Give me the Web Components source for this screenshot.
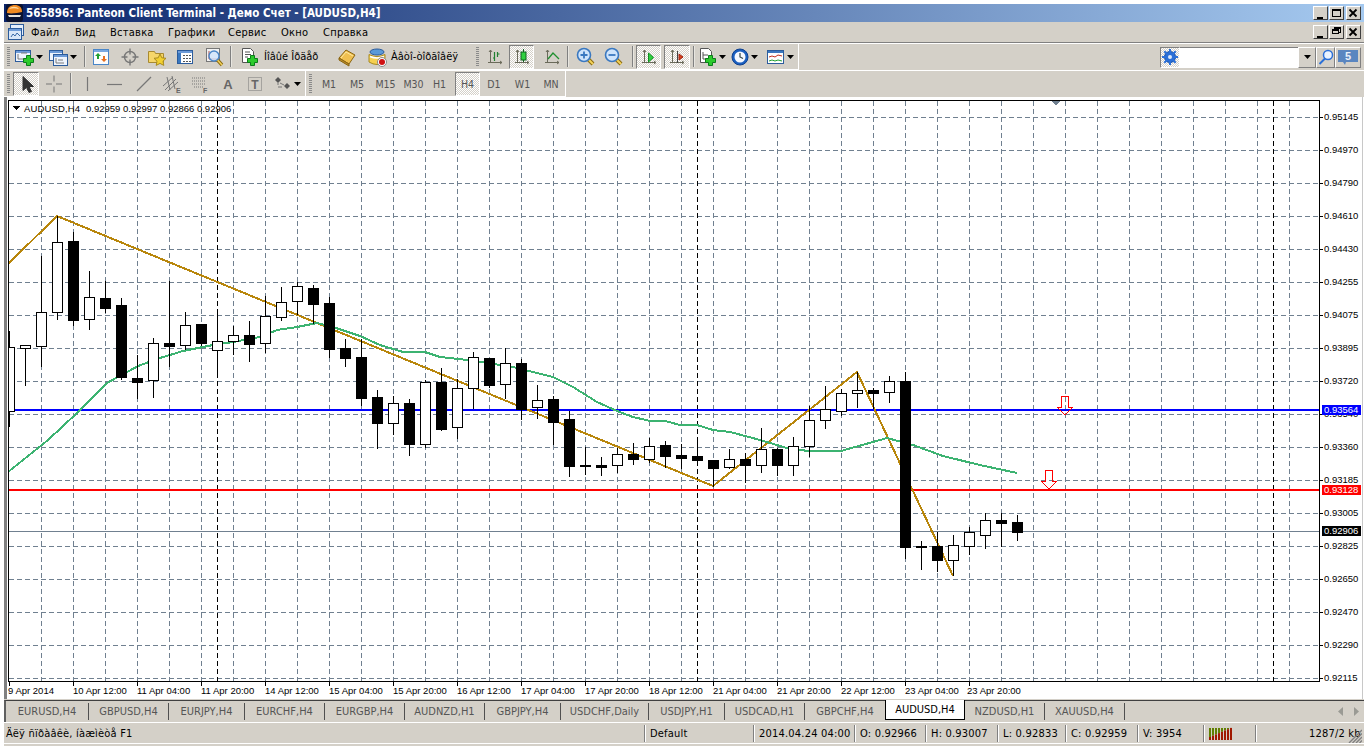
<!DOCTYPE html>
<html>
<head>
<meta charset="utf-8">
<title>Panteon Client Terminal</title>
<style>
  html, body { margin: 0; padding: 0; background: #fff; overflow: hidden; }
  body { font: 11px "DejaVu Sans Condensed", "DejaVu Sans", "Liberation Sans", sans-serif; color: #000; }
</style>
</head>
<body>
<mt-window>
  <mt-titlebar>565896: Panteon Client Terminal - Демо Счет - [AUDUSD,H4]</mt-titlebar>
  <mt-menubar>
    <mt-menu w="44">Файл</mt-menu>
    <mt-menu w="35">Вид</mt-menu>
    <mt-menu w="58">Вставка</mt-menu>
    <mt-menu w="60">Графики</mt-menu>
    <mt-menu w="53">Сервис</mt-menu>
    <mt-menu w="42">Окно</mt-menu>
    <mt-menu w="50">Справка</mt-menu>
  </mt-menubar>
  <mt-row h="27">
    <mt-toolbar>
      <mt-grip w="8"></mt-grip>
      <mt-tool icon="newchart" w="33" arrow></mt-tool>
      <mt-tool icon="profiles" w="35" arrow></mt-tool>
      <mt-sep w="8"></mt-sep>
      <mt-tool icon="market" w="25"></mt-tool>
      <mt-tool icon="target" w="34"></mt-tool>
      <mt-tool icon="folder" w="20"></mt-tool>
      <mt-tool icon="terminal" w="36"></mt-tool>
      <mt-tool icon="tester" w="23"></mt-tool>
      <mt-sep w="8"></mt-sep>
      <mt-tool icon="order" w="86" start="6" label="Íîâûé Îðäåð"></mt-tool>
      <mt-tool icon="gold" w="40" start="18"></mt-tool>
      <mt-tool icon="auto" w="112" start="7" label="Àâòî-òîðãîâëÿ"></mt-tool>
    </mt-toolbar>
    <mt-toolbar edge>
      <mt-grip w="10"></mt-grip>
      <mt-tool icon="bars" w="26"></mt-tool>
      <mt-tool icon="candles" w="25" gap="1" pressed></mt-tool>
      <mt-tool icon="line" w="29" gap="3"></mt-tool>
      <mt-sep w="3" ></mt-sep>
      <mt-tool icon="zoomin" w="29" gap="2"></mt-tool>
      <mt-tool icon="zoomout" w="28"></mt-tool>
      <mt-sep w="8"></mt-sep>
      <mt-tool icon="scroll" w="25" pressed></mt-tool>
      <mt-tool icon="shift" w="26" gap="3" pressed></mt-tool>
      <mt-sep w="6"></mt-sep>
      <mt-tool icon="indicators" w="31" arrow></mt-tool>
      <mt-tool icon="clock" w="34" arrow></mt-tool>
      <mt-tool icon="templates" w="37" arrow></mt-tool>
    </mt-toolbar>
    <mt-search></mt-search>
  </mt-row>
  <mt-row h="27" dark>
    <mt-toolbar edge>
      <mt-grip w="9"></mt-grip>
      <mt-tool icon="pointer" w="26" pressed></mt-tool>
      <mt-tool icon="cross" w="25" gap="2"></mt-tool>
      <mt-sep w="8"></mt-sep>
      <mt-tool icon="vline" w="26"></mt-tool>
      <mt-tool icon="hline" w="30"></mt-tool>
      <mt-tool icon="trend" w="28"></mt-tool>
      <mt-tool icon="channel" w="28"></mt-tool>
      <mt-tool icon="fibo" w="28"></mt-tool>
      <mt-tool icon="letter" w="27"></mt-tool>
      <mt-tool icon="textlabel" w="28"></mt-tool>
      <mt-tool icon="shapes" w="36" arrow></mt-tool>
    </mt-toolbar>
    <mt-toolbar edge>
      <mt-grip w="9"></mt-grip>
      <mt-tool w="28" text="M1"></mt-tool>
      <mt-tool w="28" text="M5"></mt-tool>
      <mt-tool w="29" text="M15"></mt-tool>
      <mt-tool w="27" text="M30"></mt-tool>
      <mt-tool w="25" text="H1" ></mt-tool>
      <mt-tool w="25" gap="3" text="H4" pressed></mt-tool>
      <mt-tool w="28" text="D1"></mt-tool>
      <mt-tool w="29" text="W1"></mt-tool>
      <mt-tool w="28" text="MN"></mt-tool>
    </mt-toolbar>
  </mt-row>
  <mt-chart></mt-chart>
  <mt-tabs>
    <mt-tab w="83">EURUSD,H4</mt-tab>
    <mt-tab w="80">GBPUSD,H4</mt-tab>
    <mt-tab w="76">EURJPY,H4</mt-tab>
    <mt-tab w="80">EURCHF,H4</mt-tab>
    <mt-tab w="80">EURGBP,H4</mt-tab>
    <mt-tab w="80">AUDNZD,H1</mt-tab>
    <mt-tab w="76">GBPJPY,H4</mt-tab>
    <mt-tab w="88">USDCHF,Daily</mt-tab>
    <mt-tab w="76">USDJPY,H1</mt-tab>
    <mt-tab w="80">USDCAD,H1</mt-tab>
    <mt-tab w="80" plain>GBPCHF,H4</mt-tab>
    <mt-tab w="80" active>AUDUSD,H4</mt-tab>
    <mt-tab w="80">NZDUSD,H1</mt-tab>
    <mt-tab w="80">XAUUSD,H4</mt-tab>
  </mt-tabs>
  <mt-status>
    <mt-cell w="640" first>Äëÿ ñïðàâêè, íàæìèòå F1</mt-cell>
    <mt-cell w="109">Default</mt-cell>
    <mt-cell w="101">2014.04.24 04:00</mt-cell>
    <mt-cell w="71">O: 0.92966</mt-cell>
    <mt-cell w="72">H: 0.93007</mt-cell>
    <mt-cell w="68">L: 0.92833</mt-cell>
    <mt-cell w="72">C: 0.92959</mt-cell>
    <mt-cell w="66">V: 3954</mt-cell>
    <mt-cell w="52" meter></mt-cell>
    <mt-cell w="100" pad="53">1287/2 kb</mt-cell>
  </mt-status>
</mt-window>

<script>
'use strict';

(function() {
  const FACE = '#d4d0c8';
  const FONT = '"DejaVu Sans Condensed", "DejaVu Sans", "Liberation Sans", sans-serif';

  // small drawing helpers for the toolbar icons
  const plus = (x, y) => `<path d="M${x + 3.5} ${y + .5}h4v3h3v4h-3v3h-4v-3h-3v-4h3z" fill="#2ccb2c" stroke="#0a7d1a"/>`;
  const axes = `<path d="M5.5 3v13M3 15.5h14M4 5l1.5-2 1.5 2M15 14l2 1.5-2 1.5" fill="none" stroke="#6a6a5a"/>`;
  const lens = (sign) => `<path d="M12 12l5 5" stroke="#8a6a10" stroke-width="4"/><path d="M12 12l5 5" stroke="#f4d35a" stroke-width="2"/>
    <circle cx="8" cy="8" r="6.5" fill="#cfe4fb" stroke="#3a78c0" stroke-width="1.6"/>${sign}`;
  const win = (x, y, w, h) => `<rect x="${x + .5}" y="${y + .5}" width="${w}" height="${h}" fill="#eef4fd" stroke="#2c5c9c"/><rect x="${x + 1}" y="${y + 1}" width="${w - 1}" height="2" fill="#6d9bd8"/>`;

  const ICONS = {
    newchart: `${win(0, 3, 15, 11)}<path d="M3 7v5h8M6 6h6" fill="none" stroke="#7b7b7b"/>${plus(8, 8)}`,
    profiles: `${win(0, 3, 13, 10)}${win(4, 7, 14, 11)}<path d="M7 11v5h8M9 13h5" fill="none" stroke="#7b7b7b"/>`,
    market: `<rect x="2.5" y="2.5" width="15" height="15" fill="#fdfdfd" stroke="#4a86c8"/><rect x="3" y="3" width="14" height="2" fill="#7aa8e0"/><path d="M7 6l3 3H8v3H6V9H4z" fill="#20a030"/><path d="M13 15l-3-3h2V9h2v3h2z" fill="#e87020"/>`,
    target: `<circle cx="10" cy="10" r="5.5" fill="none" stroke="#777" stroke-width="1.4"/><path d="M10 1.5v6M10 12.5v6M1.5 10h6M12.5 10h6" stroke="#777" stroke-width="1.4"/>`,
    folder: `<path d="M1.5 4.5h6l1 2h8v9h-15z" fill="#f6d66a" stroke="#a88a30"/><path d="M13 7l1.8 3.8 4.2.5-3 2.9.8 4.2-3.8-2-3.8 2 .8-4.2-3-2.9 4.2-.5z" fill="#f2d030" stroke="#a88a20"/>`,
    terminal: `<rect x="2.5" y="3.5" width="15" height="13" fill="#fff" stroke="#2c5c9c"/><rect x="3" y="4" width="14" height="2" fill="#6d9bd8"/><rect x="3" y="6" width="3" height="10" fill="#3a78c0"/><path d="M8 8.5h8M8 11.500h8M8 14.500h8" stroke="#555" stroke-dasharray="2 1"/>`,
    tester: `<rect x="1.500" y="1.500" width="13" height="13" fill="#f2f2f2" stroke="#777"/><path d="M4 4v8h8" fill="none" stroke="#b05050"/><path d="M12.500 13l4.500 5" stroke="#8a6a10" stroke-width="3.400"/><path d="M12.500 13l4.500 5" stroke="#f4d35a" stroke-width="1.500"/><circle cx="9" cy="9" r="5" fill="#cfe4fb" fill-opacity=".8" stroke="#4a86c8" stroke-width="1.400"/>`,
    order: `<path d="M2.500 1.500h8l3 3v11h-11z" fill="#fff" stroke="#555"/><path d="M5 5h5M5 7.500h6M5 10h3" stroke="#555"/>${plus(7, 8)}`,
    gold: `<path d="M1 11l7-8 9 5-6 9z" fill="#f0c050" stroke="#8a6410"/><path d="M3 11l5-6 7 4" fill="none" stroke="#ffe9a0"/><path d="M1 11l10 6v2L1 13z" fill="#b88a28" stroke="#8a6410"/>`,
    auto: `<ellipse cx="10" cy="5" rx="7" ry="3" fill="#5a9ad8" stroke="#2c5c9c"/><path d="M2 7.500q8 4 16 0L18 15q-8 5-16 0z" fill="#f6d050" stroke="#a88a20"/><path d="M3 9.500q7 3 14 0" fill="none" stroke="#fff" stroke-width="1.500"/><circle cx="15" cy="15" r="4.500" fill="#fff" stroke="#888"/><circle cx="15" cy="15" r="3" fill="#d01010"/>`,
    bars: `${axes}<path d="M9.500 5v9M12.500 5v5M9.500 11H8M12.500 7h2" fill="none" stroke="#208030" stroke-width="1.200"/>`,
    candles: `${axes}<path d="M11.500 2v13" stroke="#106020"/><rect x="9" y="5" width="5" height="8" fill="#30d040" stroke="#106020"/>`,
    line: `${axes}<path d="M6 12l5-6 6 6" fill="none" stroke="#209030" stroke-width="1.300"/>`,
    zoomin: lens(`<path d="M4.500 8h7M8 4.500v7" stroke="#3a78c0" stroke-width="1.800"/>`),
    zoomout: lens(`<path d="M4.500 8h7" stroke="#3a78c0" stroke-width="1.800"/>`),
    scroll: `${axes}<path d="M9.500 6l5 4.500-5 4.500z" fill="#30d040" stroke="#109020"/>`,
    shift: `${axes}<path d="M10.500 4v12" stroke="#444"/><path d="M16 10l-4-3v6z" fill="#d8401a" stroke="#a02010"/>`,
    indicators: `<path d="M2.500 1.500h8l3 3v11h-11z" fill="#fff" stroke="#555"/><path d="M5 5v7h6M5 8h5" stroke="#555" fill="none"/>${plus(7, 8)}`,
    clock: `<circle cx="10" cy="10" r="8" fill="#1a5fc0" stroke="#0d3f8e"/><circle cx="10" cy="10" r="5.500" fill="#f4f8ff"/><path d="M10 6v4l3 1.500" fill="none" stroke="#344" stroke-width="1.200"/>`,
    templates: `<rect x="1.500" y="3.500" width="16" height="13" fill="#fff" stroke="#2c5c9c"/><rect x="2" y="4" width="15" height="2" fill="#3a78c0"/><path d="M3 10l3-1 3 1 3-2 4 1" fill="none" stroke="#c03020"/><path d="M3 14l3-1 3 1 3-1 4 1" fill="none" stroke="#20a030"/>`,
    pointer: `<path d="M7 2.500v14l3.500-3 2.500 5 2.500-1-2.500-5h4.500z" fill="#333" stroke="#333" stroke-linejoin="round"/>`,
    cross: `<path d="M10 1.500v6M10 12.500v6M2 10h6M12 10h6" stroke="#777"/>`,
    vline: `<path d="M10.500 3v14" stroke="#777" stroke-width="1.200"/>`,
    hline: `<path d="M2 10.500h15" stroke="#777" stroke-width="1.200"/>`,
    trend: `<path d="M3 17L17 3" stroke="#777" stroke-width="1.200"/>`,
    channel: `<path d="M1 12L11 3M3 16L14 5M6 17L16 8M5 3l3 13M10 2l3 13" stroke="#777" fill="none"/><text x="14" y="19" font-size="7" font-weight="700" fill="#666" font-family="Liberation Sans">E</text>`,
    fibo: `<path d="M2 4h14M2 7h14M2 10h14M4 13h10" stroke="#777" stroke-dasharray="1 1"/><text x="13" y="19" font-size="7" font-weight="700" fill="#666" font-family="Liberation Sans">F</text>`,
    letter: `<text x="10" y="15" text-anchor="middle" font-size="13" font-weight="700" fill="#666" font-family="Liberation Sans">A</text>`,
    textlabel: `<rect x="3.500" y="3.500" width="13" height="13" fill="none" stroke="#777" stroke-dasharray="1 1"/><text x="10" y="14.500" text-anchor="middle" font-size="12" font-weight="700" fill="#666" font-family="Liberation Sans">T</text>`,
    shapes: `<path d="M5 3l3 3-3 3-3-3z" fill="#555"/><path d="M14 9l3 3-3 3-3-3z" fill="#555"/><path d="M5 9v2M7 9l4 2M5 13h4" stroke="#777"/>`
  };

  const CANDLES = [
    [331,347,411,426,1],[345,345,348,385,1],[256,312,346,366,1],[216,242,312,319,1],[232,241,320,325,0],
    [271,297,319,329,1],[281,298,308,312,0],[298,305,377,379,0],[355,378,382,398,0],[338,343,380,397,1],
    [281,343,346,366,0],[312,325,345,349,1],[324,324,343,345,0],[310,341,350,374,1],[326,335,341,354,1],
    [321,335,344,361,0],[296,316,343,352,1],[287,302,317,320,1],[282,286,301,314,1],[285,288,304,323,0],
    [297,303,349,357,0],[339,348,358,366,0],[339,357,398,405,0],[390,397,423,448,0],[396,403,423,434,1],
    [399,403,444,455,0],[380,382,444,447,1],[368,382,429,430,0],[379,388,427,438,1],[352,357,388,408,1],
    [358,358,385,387,0],[348,363,384,398,1],[359,363,409,419,0],[385,400,407,418,1],[396,399,422,444,0],
    [411,419,466,476,0],[447,465,466,474,0],[457,465,467,475,0],[448,454,465,472,1],[443,454,459,464,0],
    [438,446,459,462,1],[441,445,456,467,0],[444,455,458,468,0],[437,456,460,465,0],[460,460,468,486,0],
    [449,459,467,468,1],[453,459,465,482,0],[428,449,465,472,1],[448,449,465,475,0],[437,446,465,475,1],
    [406,420,446,456,1],[386,409,420,428,1],[389,393,411,415,1],[372,390,393,407,1],[388,390,393,408,0],
    [376,381,392,402,1],[372,381,547,558,0],[541,546,547,569,0],[532,546,560,571,0],[535,545,560,575,1],
    [527,532,546,554,1],[513,520,535,548,1],[513,520,523,546,0],[515,522,532,540,0]
  ];
  const MA = [[8,472],[48,440],[77,413],[107,383],[138,366],[160,358],[183,351],[213,345],[233,342],[260,337],[277,330],[297,327],[317,323],[333,327],[360,336],[380,345],[403,352],[425,352],[440,357],[467,360],[487,363],[513,367],[553,377],[573,387],[597,402],[617,411],[633,417],[650,421],[665,421],[680,425],[697,425],[713,430],[730,432],[760,440],[787,448],[808,451],[841,451],[887,438],[913,445],[943,456],[980,465],[1017,473]];
  const PRICES = ['0.95145','0.94970','0.94790','0.94610','0.94430','0.94255','0.94075','0.93895','0.93720','0.93540','0.93360','0.93185','0.93005','0.92825','0.92650','0.92470','0.92290','0.92115'];
  const TIMES = ['10 Apr 12:00','11 Apr 04:00','11 Apr 20:00','14 Apr 12:00','15 Apr 04:00','15 Apr 20:00','16 Apr 12:00','17 Apr 04:00','17 Apr 20:00','18 Apr 12:00','21 Apr 04:00','21 Apr 20:00','22 Apr 12:00','23 Apr 04:00','23 Apr 20:00'];

  function shadow(el, html) {
    const root = el.attachShadow({ mode: 'open' });
    root.innerHTML = html;
    return root;
  }

  class MtWindow extends HTMLElement {
    constructor() {
      super();
      shadow(this, `<style>
        :host { display: flex; flex-direction: column; width: 1360px; height: 742px; margin: 4px 4px 0; background: ${FACE}; }
      </style><slot></slot>`);
    }
  }

  class MtTitlebar extends HTMLElement {
    constructor() {
      super();
      shadow(this, `<style>
        :host { display: flex; align-items: center; height: 18px; flex: none; color: #fff; font-weight: 700;
          background: linear-gradient(90deg, #0a246a, #a6caf0); font-size: 11.5px; }
        .logo { margin: 0 3px 0 2px; flex: none; }
        .text { flex: 1; white-space: nowrap; }
        .btns { display: flex; margin-right: 3px; }
      </style>
      <svg class="logo" width="17" height="18" viewBox="0 0 17 18">
        <rect x="0" y="0" width="17" height="18" rx="3" fill="#0a1230"/>
        <path d="M1 9C1 3 5 1 9 1s7 2 7 7c-4 1-11 2-15 1z" fill="#f08a20"/>
        <path d="M3 5c2-3 8-3 10 0-3-1-7-1-10 0z" fill="#ffd9a0"/>
        <path d="M2 11h13l-1 2H3z" fill="#e8e4dc"/>
      </svg>
      <span class="text"><slot></slot></span>
      <span class="btns">
        <mt-capbtn glyph="min"></mt-capbtn><mt-capbtn glyph="max"></mt-capbtn><mt-capbtn glyph="close" gap="2"></mt-capbtn>
      </span>`);
    }
  }

  class MtCapbtn extends HTMLElement {
    connectedCallback() {
      if (this.shadowRoot) return;
      const glyphs = {
        min: '<path d="M3 10h6v2H3z" fill="#000"/>',
        max: '<path d="M2 2h9v8H2zM3 4v5h7V4z" fill="#000" fill-rule="evenodd"/>',
        restore: '<path d="M4 1h7v6H9V8H2V3h2zM5 3h5v3H9V3zM3 5v2h5V5z" fill="#000" fill-rule="evenodd"/>',
        close: '<path d="M2.500 2.500l7 7M9.500 2.500l-7 7" stroke="#000" stroke-width="1.800"/>'
      };
      shadow(this, `<style>
        :host { display: block; width: 15px; height: 14px; margin-left: ${this.getAttribute('gap') || 1}px; box-sizing: border-box;
          background: ${FACE}; border: 1px solid; border-color: #fff #404040 #404040 #fff; }
        svg { display: block; }
      </style><svg width="13" height="12" viewBox="0 0 13 12">${glyphs[this.getAttribute('glyph')]}</svg>`);
    }
  }

  class MtMenubar extends HTMLElement {
    constructor() {
      super();
      shadow(this, `<style>
        :host { display: flex; align-items: center; height: 21px; box-sizing: border-box; flex: none; background: ${FACE}; border-bottom: 1px solid #808080; }
        svg { margin: 0 7px 0 4px; flex: none; }
        .items { flex: 1; display: flex; }
        .btns { display: flex; margin-right: 3px; }
      </style>
      <svg width="16" height="16" viewBox="0 0 16 16">
        <rect x="2.500" y=".5" width="13" height="11" fill="#e4eefb" stroke="#2c5c9c"/><rect x=".5" y="4.500" width="13" height="11" fill="#d9e7f8" stroke="#2c5c9c"/>
        <rect x="1" y="5" width="12" height="2" fill="#6d9bd8"/><path d="M3 13l2-3 2 2 2-3 3 3" fill="none" stroke="#3a6aa8"/>
      </svg>
      <span class="items"><slot></slot></span>
      <span class="btns"><mt-capbtn glyph="min"></mt-capbtn><mt-capbtn glyph="restore"></mt-capbtn><mt-capbtn glyph="close" gap="2"></mt-capbtn></span>`);
    }
  }

  class MtMenu extends HTMLElement {
    connectedCallback() {
      if (this.shadowRoot) return;
      shadow(this, `<style>:host { display: block; width: ${this.getAttribute('w')}px; letter-spacing: .25px; }</style><slot></slot>`);
    }
  }

  class MtRow extends HTMLElement {
    connectedCallback() {
      if (this.shadowRoot) return;
      shadow(this, `<style>
        :host { display: flex; height: ${this.getAttribute('h')}px; flex: none; box-sizing: border-box;
          border-top: 1px solid #fff; position: relative; }
      </style><slot></slot>`);
    }
  }

  class MtToolbar extends HTMLElement {
    connectedCallback() {
      if (this.shadowRoot) return;
      const edge = this.hasAttribute('edge') ? 'border-right: 1px solid #fff; border-bottom: 1px solid #fff;' : 'border-bottom: 1px solid #fff;';
      shadow(this, `<style>
        :host { display: flex; align-items: center; height: 100%; box-sizing: border-box; ${edge} flex: none; }
      </style><slot></slot>`);
    }
  }

  class MtGrip extends HTMLElement {
    connectedCallback() {
      if (this.shadowRoot) return;
      shadow(this, `<style>
        :host { display: flex; justify-content: center; width: ${this.getAttribute('w')}px; flex: none; }
        i { display: block; width: 3px; height: 20px; background: repeating-linear-gradient(#8a8a8a 0 1px, #d4d0c8 1px 2px); }
      </style><i></i>`);
    }
  }

  class MtSep extends HTMLElement {
    connectedCallback() {
      if (this.shadowRoot) return;
      shadow(this, `<style>
        :host { display: flex; justify-content: center; width: ${this.getAttribute('w')}px; flex: none; }
        i { display: block; width: 1px; height: 21px; background: #808080; box-shadow: 1px 0 #e8e6e0; }
      </style><i></i>`);
    }
  }

  class MtTool extends HTMLElement {
    connectedCallback() {
      if (this.shadowRoot) return;
      const a = (n) => this.getAttribute(n);
      const pressed = this.hasAttribute('pressed');
      const start = a('start');
      const icon = a('icon');
      let inner = '';
      if (icon) inner += `<svg width="20" height="20" viewBox="0 0 20 20">${ICONS[icon]}</svg>`;
      if (a('label')) inner += `<span class="lbl">${a('label')}</span>`;
      if (a('text')) inner += `<span class="txt">${a('text')}</span>`;
      if (this.hasAttribute('arrow')) inner += `<svg class="ar" width="7" height="4" viewBox="0 0 7 4"><path d="M0 0h7L3.500 4z" fill="#000"/></svg>`;
      shadow(this, `<style>
        :host { display: flex; align-items: center; justify-content: ${start ? 'flex-start' : 'center'}; box-sizing: border-box; flex: none;
          width: ${a('w')}px; height: 24px; margin-left: ${a('gap') || 0}px; padding-left: ${start || 0}px;
          ${pressed ? `background: repeating-conic-gradient(#fff 0 25%, ${FACE} 0 50%) 0 0 / 2px 2px; border: 1px solid; border-color: #808080 #fff #fff #808080;` : ''} }
        svg { flex: none; display: block; }
        .ar { margin-left: 1px; }
        .lbl { margin-left: 4px; white-space: nowrap; font-size: 11px; }
        .txt { color: #555; font-size: 10.500px; }
      </style>${inner}`);
    }
  }

  class MtSearch extends HTMLElement {
    constructor() {
      super();
      shadow(this, `<style>
        :host { display: flex; align-items: center; margin-left: auto; margin-right: 3px; height: 22px; align-self: center; }
        .b { height: 21px; box-sizing: border-box; display: flex; align-items: center; justify-content: center; border: 1px solid; border-color: #fff #808080 #808080 #fff; flex: none; }
        .gear { width: 20px; border-color: #808080 #fff #fff #808080; background: repeating-conic-gradient(#fff 0 25%, ${FACE} 0 50%) 0 0 / 2px 2px; }
        .in { width: 118px; height: 21px; box-sizing: border-box; background: #fff; border-top: 1px solid #808080; flex: none; }
        .dd { width: 18px; } .sr { width: 19px; } .ms { width: 26px; }
        .n { font: 700 11px "Liberation Sans", sans-serif; color: #fff; position: absolute; }
      </style>
      <span class="b gear"><svg width="16" height="16" viewBox="0 0 16 16"><circle cx="8" cy="8" r="5.500" fill="#2a6fd8" stroke="#1a4fa0" stroke-width="1"/><path d="M8 0v16M0 8h16M2.300 2.300l11.400 11.400M13.700 2.300L2.300 13.700" stroke="#2a6fd8" stroke-width="2"/><circle cx="8" cy="8" r="2" fill="#dbe8fa"/></svg></span>
      <span class="in"></span>
      <span class="b dd"><svg width="7" height="4" viewBox="0 0 7 4"><path d="M0 0h7L3.500 4z" fill="#000"/></svg></span>
      <span class="b sr"><svg width="16" height="16" viewBox="0 0 16 16"><circle cx="10" cy="6" r="4.500" fill="#eaf3ff" stroke="#2a6fd8" stroke-width="1.500"/><path d="M7 9.500L1.500 15" stroke="#2a6fd8" stroke-width="2"/></svg></span>
      <span class="b ms"><svg width="22" height="17" viewBox="0 0 22 17"><path d="M1 1h20v12H9l-1 3-2-3H1z" fill="#5a86c0"/><text x="11" y="11" text-anchor="middle" font-size="11" font-weight="700" fill="#eaf0f8" font-family="Liberation Sans">5</text></svg></span>`);
    }
  }

  class MtChart extends HTMLElement {
    constructor() {
      super();
      let s = '';
      const rect = (x, y, w, h, c) => `<rect x="${x}" y="${y}" width="${w}" height="${h}" fill="${c}"/>`;
      // window frame
      s += rect(4, 97, 1360, 602, '#fff');
      s += rect(4, 96, 1360, 1, '#404040') + rect(4, 97, 3, 602, '#808080') + rect(1362, 97, 1, 602, '#c8c8c8');

      // grid
      const GRID = '#708090';
      for (let i = 0; i < 18; i++) {
        const y = Math.round(117 + i * 33.02);
        s += `<line x1="9" x2="1319" y1="${y + .5}" y2="${y + .5}" stroke="${GRID}" stroke-dasharray="5 3"/>`;
        s += rect(1319, y, 4, 1, '#000');
        s += `<text x="1324" y="${y + 3}">${PRICES[i]}</text>`;
      }
      for (let x = 41; x < 1319; x += 32) {
        s += `<line x1="${x + .5}" x2="${x + .5}" y1="101" y2="681" stroke="${GRID}" stroke-dasharray="5 3"/>`;
      }
      [217, 697, 1273].forEach(x => {
        s += `<line x1="${x + .5}" x2="${x + .5}" y1="101" y2="681" stroke="#000" stroke-dasharray="5 3"/>`;
      });

      // horizontal levels and the last price
      s += rect(9, 531, 1310, 1, '#708090');
      s += rect(9, 409, 1310, 2, '#0000ff') + rect(9, 489, 1310, 2, '#ff0000');

      // zigzag and moving average
      s += `<polyline points="8,264 57,216 713,486 857,372 953,576" fill="none" stroke="#b8860b" stroke-width="2"/>`;
      s += `<polyline points="${MA.map(p => p.join(',')).join(' ')}" fill="none" stroke="#3cb371" stroke-width="2"/>`;

      // candles
      CANDLES.forEach((c, i) => {
        const x = 9 + i * 16;
        const left = Math.max(9, x - 5);
        s += rect(x, c[0], 1, c[3] - c[0] + 1, '#000');
        if (c[4]) s += rect(left, c[1], x + 6 - left, c[2] - c[1] + 1, '#000') + rect(left + (left === x - 5 ? 1 : 0), c[1] + 1, x + 4 - left + (left === x - 5 ? 0 : 1), c[2] - c[1] - 1, '#fff');
        else s += rect(left, c[1], x + 6 - left, c[2] - c[1] + 1, '#000');
      });

      // arrows
      const arrow = (cx, top) => `<path d="M${cx - 3.500} ${top + .5}h7v10.500h4.500l-8 8-8-8h4.500z" fill="none" stroke="#ff0000"/>`;
      s += arrow(1065, 396) + arrow(1049, 470);

      // frame of the price area
      s += rect(8, 100, 1312, 1, '#000') + rect(8, 100, 1, 582, '#000') + rect(1319, 100, 1, 582, '#000') + rect(8, 681, 1312, 1, '#000');
      s += `<path d="M1051 101h9l-4.500 4.500z" fill="#708090"/>`;

      // price tags
      const tag = (y, h, c, t, ty) => rect(1322, y, 39, h, c) + `<text x="1324" y="${ty}" fill="#fff">${t}</text>`;
      s += tag(405, 10, '#0000ff', '0.93564', 413) + tag(485, 10, '#ff0000', '0.93128', 493) + tag(526, 10, '#000', '0.92906', 534);

      // time axis
      s += rect(9, 681, 1, 5, '#000');
      s += `<text x="8" y="694">9 Apr 2014</text>`;
      TIMES.forEach((t, i) => {
        const x = 73 + i * 64;
        s += rect(x, 681, 1, 5, '#000');
        s += `<text x="${i === 14 ? 967 : x}" y="694">${t}</text>`;
      });

      // header
      s += `<path d="M12 106h8l-4 4z" fill="#000"/>`;
      s += `<text x="24" y="112" textLength="56">AUDUSD,H4</text><text x="86" y="112">0.92959 0.92997 0.92866 0.92906</text>`;

      shadow(this, `<style>
        :host { display: block; height: 602px; flex: none; }
        svg { display: block; }
        text { font: 9.500px "Liberation Sans", sans-serif; fill: #000; text-rendering: optimizeSpeed; }
        .edge { shape-rendering: crispEdges; }
      </style><svg class="edge" width="1360" height="602" viewBox="4 97 1360 602">${s}</svg>`);
      // coloured tag text is white, the stylesheet must not override it
      this.shadowRoot.querySelectorAll('text[fill]').forEach(t => { t.style.fill = t.getAttribute('fill'); });
    }
  }

  class MtTabs extends HTMLElement {
    constructor() {
      super();
      shadow(this, `<style>
        :host { display: flex; height: 22px; flex: none; box-sizing: border-box; border-top: 1px solid #404040; border-left: 2px solid #606060; margin-top: 1px; position: relative; }
        .nav { margin-left: auto; margin-right: 5px; display: flex; gap: 11px; align-items: center; }
      </style><slot></slot>
      <span class="nav">
        <svg width="5" height="9" viewBox="0 0 5 9"><path d="M5 0v9L0 4.500z" fill="#9a9a94"/></svg>
        <svg width="5" height="9" viewBox="0 0 5 9"><path d="M0 0v9l5-4.500z" fill="#9a9a94"/></svg>
      </span>`);
    }
  }

  class MtTab extends HTMLElement {
    connectedCallback() {
      if (this.shadowRoot) return;
      const active = this.hasAttribute('active');
      const right = active ? 'border-right: 1px solid #000; border-bottom: 1px solid #000; border-left: 1px solid #000; background: #fff; color: #000; margin-top: -1px; height: 20px; z-index: 1;'
        : (this.hasAttribute('plain') ? 'color: #555; height: 17px;' : 'border-right: 1px solid #505050; height: 17px; color: #555;');
      shadow(this, `<style>
        :host { display: flex; align-items: center; justify-content: center; box-sizing: border-box; flex: none;
          width: ${this.getAttribute('w')}px; font-size: 11px; ${right} margin-top: ${active ? '-1px' : '2px'}; }
      </style><slot></slot>`);
    }
  }

  class MtStatus extends HTMLElement {
    constructor() {
      super();
      shadow(this, `<style>
        :host { display: flex; height: 22px; flex: none; box-sizing: border-box; border-top: 1px solid #fff; border-bottom: 1px solid #fff; position: relative; }
        .grip { position: absolute; right: 2px; bottom: 0; }
      </style><slot></slot>
      <svg class="grip" width="14" height="14" viewBox="0 0 14 14"><path d="M14 1L1 14M14 4.500L4.500 14M14 8l-6 6M14 11.500L11.500 14" stroke="#808080" stroke-width="1.400"/></svg>`);
    }
  }

  class MtCell extends HTMLElement {
    connectedCallback() {
      if (this.shadowRoot) return;
      const first = this.hasAttribute('first');
      let bars = '';
      if (this.hasAttribute('meter')) {
        for (let i = 0; i < 8; i++) {
          const red = 3 + i * 1.300;
          bars += `<rect x="${i * 3}" y="1" width="2" height="${12 - red}" fill="#5f7f00"/><rect x="${i * 3}" y="${13 - red}" width="2" height="${red}" fill="#a01800"/>`;
        }
        bars = `<svg width="24" height="14" viewBox="0 0 24 14">${bars}</svg>`;
      }
      shadow(this, `<style>
        :host { display: flex; align-items: center; box-sizing: border-box; flex: none; width: ${this.getAttribute('w')}px; white-space: nowrap;
          padding-left: ${this.getAttribute('pad') || (first ? 2 : 5)}px; ${first ? '' : 'border-left: 1px solid #808080; box-shadow: inset 1px 0 #fff;'} margin: 2px 0 1px; letter-spacing: .2px; }
      </style>${bars}<slot></slot>`);
    }
  }

  customElements.define('mt-window', MtWindow);
  customElements.define('mt-capbtn', MtCapbtn);
  customElements.define('mt-titlebar', MtTitlebar);
  customElements.define('mt-menubar', MtMenubar);
  customElements.define('mt-menu', MtMenu);
  customElements.define('mt-row', MtRow);
  customElements.define('mt-toolbar', MtToolbar);
  customElements.define('mt-grip', MtGrip);
  customElements.define('mt-sep', MtSep);
  customElements.define('mt-tool', MtTool);
  customElements.define('mt-search', MtSearch);
  customElements.define('mt-chart', MtChart);
  customElements.define('mt-tabs', MtTabs);
  customElements.define('mt-tab', MtTab);
  customElements.define('mt-status', MtStatus);
  customElements.define('mt-cell', MtCell);
})();
</script>
</body>
</html>
